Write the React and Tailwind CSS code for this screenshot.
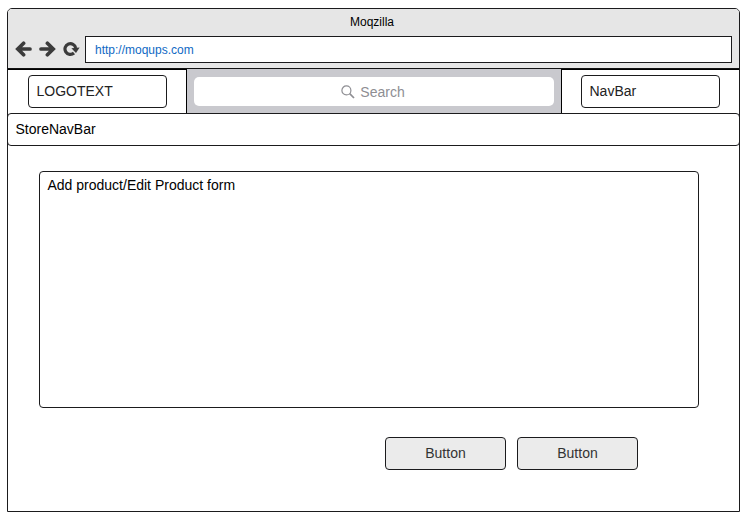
function ArrowLeft({ className }) {
  return (
    <svg className={className} width="17" height="16" viewBox="0 0 17 16" fill="none" stroke="#3b3b3b" strokeWidth="3.7" strokeLinecap="round" strokeLinejoin="miter">
      <path d="M8.6 2.2 L2.8 8 L8.6 13.8 M3.4 8 H15" />
    </svg>
  );
}

function Reload() {
  return (
    <svg width="17" height="16" viewBox="0 0 17 16" fill="none">
      <path d="M11 12 A5.4 5.4 0 1 1 12.7 7" stroke="#3b3b3b" strokeWidth="3.2" />
      <path d="M8.4 7.2 L16.6 6.4 L13 12 Z" fill="#3b3b3b" />
    </svg>
  );
}

function SearchIcon() {
  return (
    <svg width="14" height="14" viewBox="0 0 14 14" fill="none" stroke="#8e8e93" strokeWidth="1.2">
      <circle cx="5.4" cy="5.4" r="4.5" />
      <path d="M8.7 8.7 L13 13" strokeWidth="1.7" />
    </svg>
  );
}

function Button() {
  return (
    <button className="h-[33px] w-[121px] rounded-[4px] border border-[#1b1b1d] bg-[#ebebeb] text-sm leading-[31px] text-[#333]">
      Button
    </button>
  );
}

function Label({ children }) {
  return (
    <div className="h-[33px] w-[139px] rounded-[4px] border border-[#1b1b1d] pl-[7.5px] text-sm leading-[31px] text-[#222]">
      {children}
    </div>
  );
}

export default function App() {
  return (
    <div className="h-[519px] w-[752px] overflow-hidden bg-white pt-2 pl-[7px] font-['Liberation_Sans',Arial,sans-serif]">
      <div className="h-[504px] w-[733px] rounded-t-[5px] border border-[#1b1b1d]">
        <header className="h-[60px] rounded-t-[4px] border-b border-[#111] bg-[#e6e6e6]">
          <div className="h-[27px] pr-[3px] text-center text-xs leading-[26px] text-black">Moqzilla</div>
          <div className="flex h-[27px] items-center">
            <div className="flex w-[77px] gap-[7px] pb-[2px] pl-[7px]">
              <ArrowLeft />
              <ArrowLeft className="-scale-x-100" />
              <Reload />
            </div>
            <div className="h-[27px] w-[647px] border border-[#1b1b1d] bg-white pl-[9px] text-xs leading-[26px] text-[#0f69c4]">
              http://moqups.com
            </div>
          </div>
        </header>
        <div className="flex h-11">
          <div className="w-[179px] border-t border-r border-black pt-[5px] pl-5">
            <Label>LOGOTEXT</Label>
          </div>
          <div className="w-[374px] bg-[#c9c9ce] px-[7px] pt-2">
            <div className="flex h-[29px] items-center justify-center gap-[5px] rounded-[5px] bg-white pr-[2px] text-sm text-[#8e8e93]">
              <SearchIcon />
              <span>Search</span>
            </div>
          </div>
          <div className="flex-1 border-t border-l border-black pt-[5px] pl-[19px]">
            <Label>NavBar</Label>
          </div>
        </div>
        <nav className="-mx-px h-[33px] rounded-[4px] border border-[#1b1b1d] pl-[7.5px] text-sm leading-[31px] text-black">
          StoreNavBar
        </nav>
        <main className="pt-[25px] pl-[31px]">
          <div className="h-[237px] w-[660px] rounded-[4px] border border-[#1b1b1d] pt-[3px] pl-[7.5px] text-sm text-black">
            Add product/Edit Product form
          </div>
          <div className="mt-[29px] flex gap-[11px] pl-[346px]">
            <Button />
            <Button />
          </div>
        </main>
      </div>
    </div>
  );
}
